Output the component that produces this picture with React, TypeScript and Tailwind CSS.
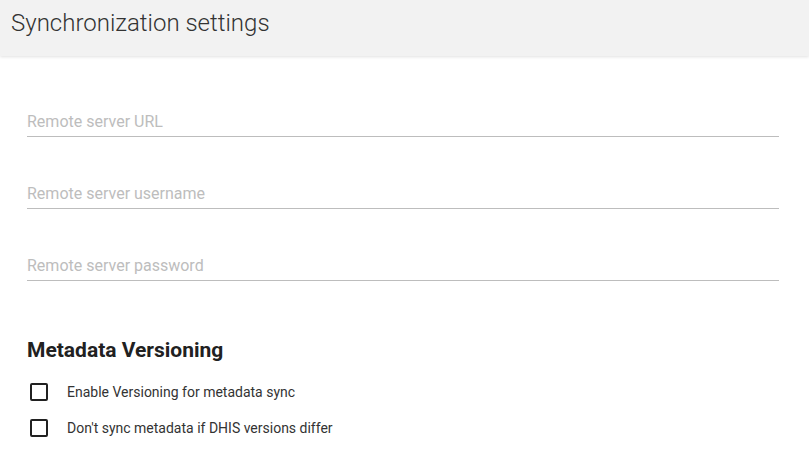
import React from "react";

function Field({ label }: { label: string }) {
  return (
    <div className="border-b border-[#bdbdbd] pt-[1px] pb-[2px]">
      <div className="h-6 leading-6 text-[16px] text-[#bdbdbd]">{label}</div>
    </div>
  );
}

function Check({ label }: { label: string }) {
  return (
    <div className="flex items-center h-[36px]">
      <div className="ml-[3px] w-[18px] h-[18px] border-2 border-[#212121] rounded-[2px]" />
      <div className="ml-[19px] text-[14px] text-[#333333]">{label}</div>
    </div>
  );
}

export default function App() {
  return (
    <div className="w-[809px] h-[476px] bg-white overflow-hidden" style={{ fontFamily: "Roboto, sans-serif" }}>
      <div className="h-[56px] bg-[#f2f2f2] shadow-[0_1px_3px_rgba(0,0,0,0.12)] pl-[11px] pt-[7px]">
        <h1 className="text-[24px] font-light text-[#333333] leading-[32px]">Synchronization settings</h1>
      </div>
      <div className="pl-[27px] pr-[30px] pt-[53px]">
        <div className="flex flex-col gap-[44px]">
          <Field label="Remote server URL" />
          <Field label="Remote server username" />
          <Field label="Remote server password" />
        </div>
        <h2 className="mt-[55px] text-[21px] font-bold text-[#212121] leading-[28px]">Metadata Versioning</h2>
        <div className="mt-[10px] flex flex-col">
          <Check label="Enable Versioning for metadata sync" />
          <Check label="Don't sync metadata if DHIS versions differ" />
        </div>
      </div>
    </div>
  );
}
